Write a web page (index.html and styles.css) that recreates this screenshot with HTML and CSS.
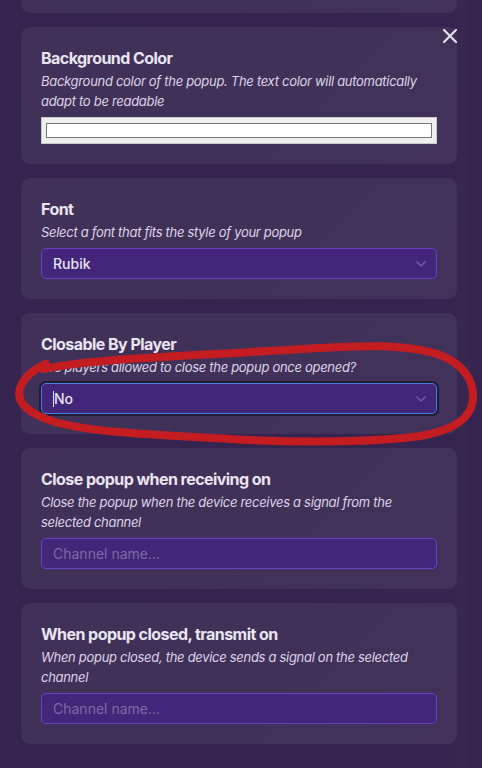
FILE: index.html
```html
<!DOCTYPE html>
<html>
<head>
<meta charset="utf-8">
<link rel="stylesheet" href="styles.css">
</head>
<body>
<div class="page">
  <div class="list">
    <div class="card card-top"></div>

    <div class="card">
      <div class="title">Background Color</div>
      <div class="desc">Background color of the popup. The text color will automatically adapt to be readable</div>
      <div class="color-input"><div class="color-swatch"></div></div>
    </div>

    <div class="card">
      <div class="title">Font</div>
      <div class="desc">Select a font that fits the style of your popup</div>
      <div class="select">
        <span class="value">Rubik</span>
        <svg class="chev" width="10" height="6" viewBox="0 0 10 6"><path d="M0.5 0.5 L5 5 L9.5 0.5" fill="none" stroke="#7a64a6" stroke-width="1.2"/></svg>
      </div>
    </div>

    <div class="card">
      <div class="title">Closable By Player</div>
      <div class="desc">Are players allowed to close the popup once opened?</div>
      <div class="select focused">
        <span class="value"><span class="caret"></span>No</span>
        <svg class="chev" width="10" height="6" viewBox="0 0 10 6"><path d="M0.5 0.5 L5 5 L9.5 0.5" fill="none" stroke="#7a64a6" stroke-width="1.2"/></svg>
      </div>
    </div>

    <div class="card">
      <div class="title">Close popup when receiving on</div>
      <div class="desc">Close the popup when the device receives a signal from the selected channel</div>
      <div class="select"><span class="placeholder">Channel name...</span></div>
    </div>

    <div class="card">
      <div class="title">When popup closed, transmit on</div>
      <div class="desc">When popup closed, the device sends a signal on the selected channel</div>
      <div class="select"><span class="placeholder">Channel name...</span></div>
    </div>
  </div>
  <div class="side"></div>

  <svg class="close" width="16" height="16" viewBox="0 0 16 16"><path d="M2 2 L14 14 M14 2 L2 14" stroke="#e4e0ee" stroke-width="2.2" stroke-linecap="round"/></svg>

  <svg class="scribble" width="482" height="768" viewBox="0 0 482 768">
    <path d="M43 369 C 90 359, 170 357, 267 351 C 340 347, 400 341, 440 355 C 463 364, 474 380, 473 398 C 472 418, 455 430, 420 436 C 380 442, 300 443, 230 439 C 160 435, 90 433, 52 421 C 27 413, 16 402, 20 388 C 24 377, 32 370, 46 364" fill="none" stroke="#c41d21" stroke-width="8" stroke-linecap="round" stroke-linejoin="round"/>
  </svg>
</div>
</body>
</html>
```

FILE: styles.css
```css
* { box-sizing: border-box; }
html, body {
  margin: 0;
  padding: 0;
  background: #34244f;
  width: 482px;
  height: 768px;
  overflow: hidden;
  font-family: Inter, "Noto Sans", sans-serif;
}
.page {
  position: relative;
  width: 482px;
  height: 768px;
  display: flex;
}
.list {
  width: 457px;
  padding-left: 21px;
  display: flex;
  flex-direction: column;
  gap: 14px;
}
.side {
  width: 13px;
  background: #37274f;
}
.card {
  background: linear-gradient(135deg, #413159 0%, #3f3158 50%, #42325b 100%);
  border-radius: 9px;
  padding: 20px 20px 20px 20px;
}
.card-top {
  height: 13px;
  padding: 0;
  border-radius: 0 0 9px 9px;
}
.title {
  color: #e9e5f1;
  font-size: 16px;
  font-weight: 700;
  line-height: 22px;
  letter-spacing: -0.55px;
}
.desc {
  margin-top: 2px;
  color: #dcd5e8;
  font-size: 13px;
  font-style: italic;
  line-height: 20px;
  letter-spacing: -0.3px;
}
.color-input {
  margin-top: 6px;
  height: 27px;
  background: #efefef;
  border: 1px solid #c9c9c9;
  padding: 5px 4px 5px 4px;
}
.color-swatch {
  height: 15px;
  background: #ffffff;
  border: 1px solid #777777;
}
.select {
  margin-top: 6px;
  height: 31px;
  background: #41267a;
  border: 1px solid #6a42c4;
  border-radius: 5px;
  display: flex;
  align-items: center;
  justify-content: space-between;
  padding: 0 11px 0 11px;
}
.select.focused {
  border-color: #4181e6;
  box-shadow: 0 0 0 2px #231a34;
}
.value {
  color: #e8e3f2;
  font-size: 14px;
  font-weight: 500;
  display: flex;
  align-items: center;
}
.caret {
  display: inline-block;
  width: 1px;
  height: 16px;
  background: #d8e2ff;
}
.placeholder {
  color: #7d6aa2;
  font-size: 14px;
}
.chev { margin-right: -1px; }
.close {
  position: absolute;
  left: 442px;
  top: 28px;
}
.scribble {
  position: absolute;
  left: 0;
  top: 0;
  pointer-events: none;
}
```
